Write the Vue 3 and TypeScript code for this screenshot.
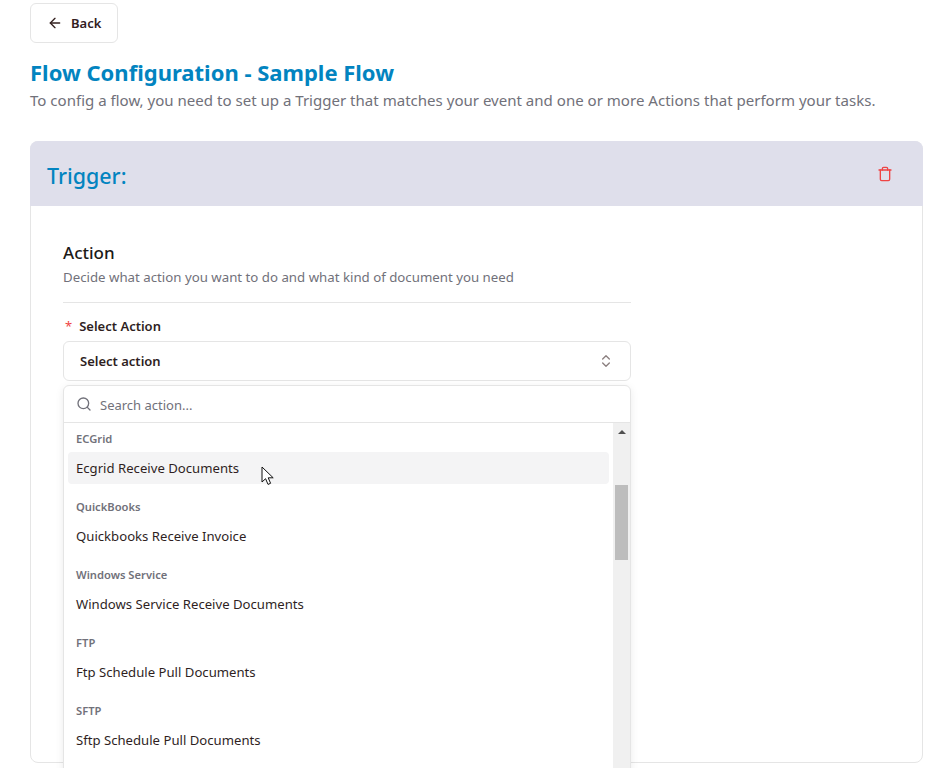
<script setup lang="ts">
const groups = [
  { label: 'ECGrid', item: 'Ecgrid Receive Documents' },
  { label: 'QuickBooks', item: 'Quickbooks Receive Invoice' },
  { label: 'Windows Service', item: 'Windows Service Receive Documents' },
  { label: 'FTP', item: 'Ftp Schedule Pull Documents' },
  { label: 'SFTP', item: 'Sftp Schedule Pull Documents' },
]
</script>

<template>
  <div class="page">
    <button class="back-btn" type="button">
      <svg width="16" height="16" viewBox="0 0 24 24" fill="none" stroke="currentColor" stroke-width="2" stroke-linecap="round" stroke-linejoin="round">
        <path d="M19 12H5" />
        <path d="m12 19-7-7 7-7" />
      </svg>
      Back
    </button>

    <h1 class="title">Flow Configuration - Sample Flow</h1>
    <p class="subtitle">To config a flow, you need to set up a Trigger that matches your event and one or more Actions that perform your tasks.</p>

    <section class="card">
      <header class="card-head">
        <h2>Trigger:</h2>
        <svg class="trash" width="16" height="16" viewBox="0 0 24 24" fill="none" stroke="currentColor" stroke-width="2" stroke-linecap="round" stroke-linejoin="round">
          <path d="M3 6h18" />
          <path d="M19 6v14a2 2 0 0 1-2 2H7a2 2 0 0 1-2-2V6" />
          <path d="M8 6V4a2 2 0 0 1 2-2h4a2 2 0 0 1 2 2v2" />
        </svg>
      </header>

      <div class="card-body">
        <h3>Action</h3>
        <p class="hint">Decide what action you want to do and what kind of document you need</p>
        <div class="rule"></div>

        <label class="field-label"><span class="req">*</span>Select Action</label>
        <div class="select-wrap">
          <div class="select">
            <span>Select action</span>
            <svg width="16" height="16" viewBox="0 0 24 24" fill="none" stroke="currentColor" stroke-width="2" stroke-linecap="round" stroke-linejoin="round">
              <path d="m7 15 5 5 5-5" />
              <path d="m7 9 5-5 5 5" />
            </svg>
          </div>

          <div class="popover">
            <div class="search">
              <svg width="16" height="16" viewBox="0 0 24 24" fill="none" stroke="currentColor" stroke-width="2" stroke-linecap="round" stroke-linejoin="round">
                <circle cx="11" cy="11" r="8" />
                <path d="m21 21-4.3-4.3" />
              </svg>
              <span>Search action...</span>
            </div>
            <div class="list-row">
              <div class="list">
                <div v-for="(g, i) in groups" :key="g.label" class="group">
                  <div class="group-label">{{ g.label }}</div>
                  <div class="item" :class="{ active: i === 0 }">{{ g.item }}</div>
                </div>
              </div>
              <div class="scrollbar">
                <span class="arrow"></span>
                <span class="thumb"></span>
              </div>
            </div>
            <svg class="cursor" width="14" height="20" viewBox="0 0 14 20">
              <path d="M1 1v15l3.6-3.3L7 18.4l2.6-1.1-2.4-5.5h5z" fill="#fff" stroke="#111" stroke-width="1" stroke-linejoin="round" />
            </svg>
          </div>
        </div>
      </div>
    </section>
  </div>
</template>

<style>
html,
body {
  margin: 0;
  height: 768px;
  overflow: hidden;
  background: #fff;
}
</style>

<style scoped>
.page {
  box-sizing: border-box;
  height: 768px;
  overflow: hidden;
  padding: 3px 3px 0 30px;
  font-family: "Noto Sans", "Open Sans", sans-serif;
  color: #2f1f1f;
}

.back-btn {
  display: flex;
  align-items: center;
  gap: 8px;
  box-sizing: border-box;
  width: 88px;
  height: 40px;
  padding: 0 0 0 16px;
  background: #fff;
  border: 1px solid #e5e5e5;
  border-radius: 6px;
  color: #33201f;
  font: 600 13px "Noto Sans", sans-serif;
}

.title {
  margin: 13px 0 0;
  font-size: 22px;
  line-height: 32px;
  font-weight: 700;
  color: #0284c0;
}

.subtitle {
  margin: 0;
  font-size: 15.05px;
  line-height: 24px;
  color: #71717a;
  white-space: nowrap;
}

.card {
  box-sizing: border-box;
  height: 622px;
  margin-top: 29px;
  border: 1px solid #e5e5e5;
  border-radius: 8px;
}

.card-head {
  display: flex;
  align-items: center;
  justify-content: space-between;
  height: 65px;
  margin: -1px -1px 0;
  padding: 4px 30px 0 17px;
  box-sizing: border-box;
  background: #dfdfeb;
  border-radius: 8px 8px 0 0;
}

.card-head h2 {
  margin: 0;
  font-size: 21.4px;
  font-weight: 500;
  color: #0284c0;
}

.trash {
  color: #ef4444;
  margin-top: -3px;
}

.card-body {
  width: 568px;
  padding: 35px 0 0 32px;
}

.card-body h3 {
  margin: 0;
  font-size: 17px;
  line-height: 24px;
  font-weight: 500;
  color: #1c1917;
}

.hint {
  margin: 0;
  font-size: 13.25px;
  line-height: 24px;
  color: #71717a;
}

.rule {
  height: 1px;
  margin-top: 13px;
  background: #e5e5e5;
}

.field-label {
  display: block;
  margin-top: 13px;
  font-size: 13px;
  line-height: 20px;
  font-weight: 600;
}

.req {
  margin-right: 7px;
  margin-left: 2px;
  color: #ef4444;
  font-weight: 400;
}

.select-wrap {
  position: relative;
  margin-top: 5px;
}

.select {
  display: flex;
  align-items: center;
  justify-content: space-between;
  box-sizing: border-box;
  height: 40px;
  padding: 0 16px;
  border: 1px solid #e5e5e5;
  border-radius: 6px;
  font-size: 13px;
  font-weight: 600;
}

.select svg {
  color: #8b7f7f;
}

.popover {
  position: absolute;
  top: 44px;
  left: 0;
  right: 0;
  height: 420px;
  background: #fff;
  border: 1px solid #e5e5e5;
  border-radius: 6px 6px 0 0;
  box-shadow: 0 2px 8px rgba(0, 0, 0, 0.08);
}

.search {
  display: flex;
  align-items: center;
  gap: 8px;
  height: 36px;
  padding: 0 12px;
  border-bottom: 1px solid #e5e5e5;
  color: #71717a;
  font-size: 13px;
}

.search span {
  position: relative;
  top: 1px;
}

.list-row {
  display: flex;
  height: 383px;
}

.list {
  flex: 1;
  padding: 0 4px;
  overflow: hidden;
}

.group-label {
  padding: 7px 8px 0;
  height: 22px;
  box-sizing: border-box;
  font-size: 11.2px;
  font-weight: 600;
  line-height: 18px;
  color: #71717a;
}

.group {
  padding-bottom: 7px;
}

.item {
  height: 32px;
  padding: 0 8px;
  margin-top: 7px;
  border-radius: 4px;
  font-size: 13.15px;
  line-height: 32px;
}

.item.active {
  background: #f4f4f5;
}

.scrollbar {
  flex: none;
  width: 17px;
  background: #f0f0f0;
}

.arrow {
  display: block;
  width: 0;
  margin: 7px auto 0;
  border: 4px solid transparent;
  border-top: 0;
  border-bottom: 4px solid #505050;
}

.thumb {
  display: block;
  width: 13px;
  height: 75px;
  margin: 51px auto 0;
  background: #bdbdbd;
}

.cursor {
  position: absolute;
  left: 197px;
  top: 80px;
}
</style>
